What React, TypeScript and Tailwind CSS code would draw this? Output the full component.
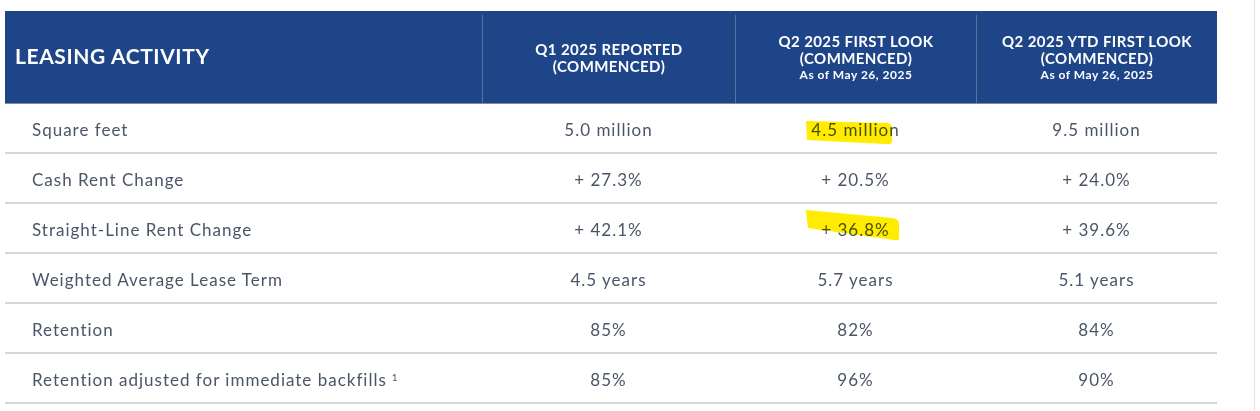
import * as React from 'react';

const cols = ['w-[477px]', 'w-[253px]', 'w-[241px]', 'w-[241px]'];

const rows: { label: string; sup?: string; values: string[]; mark?: number }[] = [
  { label: 'Square feet', values: ['5.0 million', '4.5 million', '9.5 million'], mark: 1 },
  { label: 'Cash Rent Change', values: ['+ 27.3%', '+ 20.5%', '+ 24.0%'] },
  { label: 'Straight-Line Rent Change', values: ['+ 42.1%', '+ 36.8%', '+ 39.6%'], mark: 2 },
  { label: 'Weighted Average Lease Term', values: ['4.5 years', '5.7 years', '5.1 years'] },
  { label: 'Retention', values: ['85%', '82%', '84%'] },
  { label: 'Retention adjusted for immediate backfills', sup: '1', values: ['85%', '96%', '90%'] },
];

// marker strokes drawn over the text (multiply so the text stays readable)
function Marker({ kind }: { kind: number }) {
  if (kind === 1) {
    return (
      <svg className="pointer-events-none absolute left-[-5px] top-[4px] mix-blend-multiply" width="88" height="25" viewBox="0 0 88 25">
        <path d="M0 0 L82 2 Q86 3 86 8 L86 21 Q85 24 80 23 L1 19 Z" fill="#ffec00" />
      </svg>
    );
  }
  return (
    <svg className="pointer-events-none absolute left-[-15px] top-[-7px] mix-blend-multiply" width="95" height="32" viewBox="0 0 95 32">
      <path d="M0 0 L86 8 Q93 9 93 14 L93 29 Q92 31 88 30 L2 18 Z" fill="#ffec00" />
    </svg>
  );
}

function HeaderCell({ title, sub, note, first }: { title: string; sub?: string; note?: string; first?: boolean }) {
  return (
    <div className="flex h-full flex-col pt-[4px]">
      <div className={'flex flex-1 flex-col items-center justify-center pb-[3px] text-center ' + (first ? '' : 'border-l border-[#5a70a0]')}>
        <div className="text-[15px] font-bold leading-[17px] tracking-[0.4px]">{title}</div>
        {sub && <div className="text-[15px] font-bold leading-[17px] tracking-[0.4px]">{sub}</div>}
        {note && <div className="mt-[1px] text-[12px] font-bold leading-[14px] tracking-[0.5px]">{note}</div>}
      </div>
    </div>
  );
}

export default function App() {
  return (
    <div className="h-[411px] w-[1255px] border-r border-[#e2e2e2] bg-white pl-[5px] pt-[11px] font-['Lato',sans-serif] text-[#4b5568]">
      <div className="w-[1212px]">
        <div className="flex h-[93px] border-b border-[#7f8aa6] bg-[#1f4589] text-white">
          <div className={cols[0] + ' flex items-center pl-[10px] pb-[2px]'}>
            <span className="text-[21px] font-bold tracking-[0.6px]">LEASING ACTIVITY</span>
          </div>
          <div className={cols[1]}>
            <HeaderCell title="Q1 2025 REPORTED" sub="(COMMENCED)" />
          </div>
          <div className={cols[2]}>
            <HeaderCell title="Q2 2025 FIRST LOOK" sub="(COMMENCED)" note="As of May 26, 2025" />
          </div>
          <div className={cols[3]}>
            <HeaderCell title="Q2 2025 YTD FIRST LOOK" sub="(COMMENCED)" note="As of May 26, 2025" />
          </div>
        </div>

        {rows.map((r) => (
          <div key={r.label} className="flex h-[50px] items-center border-b-2 border-[#d5d6d8] pt-[4px] text-[17px] tracking-[1px]">
            <div className={cols[0] + ' pl-[27px]'}>
              {r.label}
              {r.sup && <sup className="ml-[5px] text-[10px]">{r.sup}</sup>}
            </div>
            {r.values.map((v, i) => (
              <div key={i} className={cols[i + 1] + ' text-center'}>
                <span className="relative inline-block">
                  {v}
                  {r.mark && i === 1 && <Marker kind={r.mark} />}
                </span>
              </div>
            ))}
          </div>
        ))}
      </div>
    </div>
  );
}
